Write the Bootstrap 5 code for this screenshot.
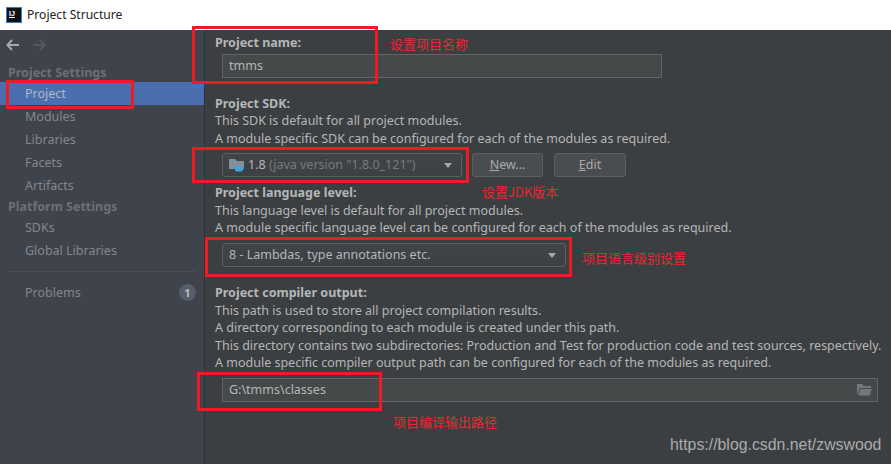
<!DOCTYPE html>
<html lang="zh">
<head>
    <meta charset="UTF-8">
    <meta name="viewport" content="width=device-width, initial-scale=1.0">
    <title>Project Structure</title>
    <link rel="stylesheet" href="https://cdn.jsdelivr.net/npm/bootstrap@5.3.0/dist/css/bootstrap.min.css">
    <script src="https://cdn.jsdelivr.net/npm/bootstrap@5.3.0/dist/js/bootstrap.bundle.min.js"></script>
    <style>
        html, body {
            height: 100%;
            overflow: hidden;
        }
        body {
            background-color: #3c3f41;
            color: #b4b6b7;
            font-family: "Noto Sans", "Open Sans", sans-serif;
            font-size: 12.5px;
            line-height: 17.5px;
        }
        .stage {
            width: 891px;
            height: 464px;
        }
        .titlebar {
            height: 30px;
            background-color: #fff;
            color: #222;
            font-size: 12.1px;
            padding-left: 6px;
            gap: 5px;
        }
        .ij-logo {
            width: 16px;
            height: 16px;
            background-color: #111;
            outline: 1px solid #2f7fd8;
            outline-offset: -1px;
            color: #fff;
            font: bold 7px/9px "Liberation Sans", sans-serif;
            padding: 2px 0 0 3px;
        }
        .sidebar {
            width: 205px;
            background-color: #3e434c;
            border-right: 1px solid #2f3234;
            color: #84878c;
        }
        .arrows {
            height: 29px;
            padding-left: 6px;
            gap: 14px;
        }
        .side-head {
            padding-left: 8px;
            font-weight: 700;
            color: #6d7076;
            height: 19px;
            line-height: 19px;
        }
        .side-item {
            height: 23px;
            line-height: 23px;
            padding-left: 25px;
            padding-right: 8px;
        }
        .side-item.picked {
            background-color: #4b6eaf;
            color: #b0b8c6;
        }
        .side-rule {
            border-top: 1px solid #4a4d52;
            margin: 9px 8px 9px 8px;
        }
        .count-pill {
            width: 17px;
            height: 17px;
            line-height: 17px;
            border-radius: 50%;
            background-color: #585d6b;
            color: #b8bbc0;
            font-size: 11px;
            font-weight: 700;
            text-align: center;
        }
        .pane {
            padding: 4px 0 0 10px;
        }
        .field-head {
            font-weight: 700;
        }
        .box-field {
            height: 24px;
            line-height: 22px;
            margin-left: 7px;
            padding: 0 5px 0 6px;
            background-color: #45494a;
            border: 1px solid #646464;
        }
        .box-combo {
            height: 24px;
            line-height: 22px;
            padding: 0 9px 0 6px;
            background-color: #3c3f41;
            background-image: linear-gradient(#40444a, #3d4043);
            border: 1px solid #5e6060;
            border-radius: 3px;
        }
        .combo-caret {
            width: 0;
            height: 0;
            border-left: 4.5px solid transparent;
            border-right: 4.5px solid transparent;
            border-top: 5px solid #a5a7a8;
        }
        .muted-ver {
            color: #787a7c;
        }
        .ide-btn {
            height: 24px;
            padding: 0;
            font-size: 12.5px;
            line-height: 22px;
            color: #a9abad;
            background-color: #494d50;
            border: 1px solid #5e6060;
            border-radius: 3px;
        }
        .name-box { width: 440px; margin-top: 2px; }
        .sdk-head { margin-top: 17px; }
        .sdk-row { margin: 6px 0 0 7px; }
        .sdk-combo { width: 240px; }
        .new-btn { width: 71px; margin-left: 10px; }
        .edit-btn { width: 72px; margin-left: 11px; }
        .lang-head { margin-top: 7px; }
        .lang-combo { width: 344px; margin: 6.5px 0 0 7px; }
        .out-head { margin-top: 17px; }
        .out-box { width: 656px; margin-top: 6.5px; }
        .note-box {
            position: absolute;
            border: 3px solid #ed1c24;
        }
        .note-text {
            position: absolute;
            color: #e8282e;
            font-family: "Noto Sans CJK SC", sans-serif;
            font-size: 13px;
            line-height: 18px;
            white-space: nowrap;
        }
        .mark-url {
            position: absolute;
            left: 670px;
            top: 434px;
            color: #a9abad;
            font-family: "Liberation Sans", sans-serif;
            font-size: 15.85px;
            line-height: 22px;
        }
        #b1 { left: 192px; top: 26px; width: 186px; height: 58px; }
        #b2 { left: 6px; top: 80px; width: 128px; height: 29px; }
        #b3 { left: 192px; top: 147px; width: 277px; height: 36px; }
        #b4 { left: 205px; top: 237px; width: 367px; height: 40px; }
        #b5 { left: 197px; top: 372px; width: 185px; height: 39px; }
        #t1 { left: 390px; top: 35px; }
        #t2 { left: 482px; top: 183px; }
        #t3 { left: 582px; top: 249px; }
        #t4 { left: 393px; top: 413px; }
    </style>
</head>
<body>
    <div class="stage position-relative d-flex flex-column">
        <div class="titlebar d-flex align-items-center flex-shrink-0">
            <div class="ij-logo"><u>IJ</u></div>
            <span>Project Structure</span>
        </div>
        <div class="d-flex flex-grow-1">
            <div class="sidebar flex-shrink-0">
                <div class="arrows d-flex align-items-center">
                    <svg width="13" height="12" viewBox="0 0 13 12"><path d="M6 1 1.500 6 6 11M2 6h11" fill="none" stroke="#a5a8ac" stroke-width="2"/></svg>
                    <svg width="13" height="12" viewBox="0 0 13 12"><path d="M7 1l4.500 5L7 11M0 6h11" fill="none" stroke="#55585d" stroke-width="2"/></svg>
                </div>
                <div class="side-head mt-1">Project Settings</div>
                <div class="side-item picked">Project</div>
                <div class="side-item">Modules</div>
                <div class="side-item">Libraries</div>
                <div class="side-item">Facets</div>
                <div class="side-item">Artifacts</div>
                <div class="side-head">Platform Settings</div>
                <div class="side-item">SDKs</div>
                <div class="side-item">Global Libraries</div>
                <div class="side-rule"></div>
                <div class="side-item d-flex justify-content-between align-items-center">
                    <span>Problems</span>
                    <span class="count-pill">1</span>
                </div>
            </div>
            <div class="pane flex-grow-1">
                <div class="field-head">Project name:</div>
                <div class="box-field name-box text-nowrap">tmms</div>

                <div class="field-head sdk-head">Project SDK:</div>
                <div>This SDK is default for all project modules.</div>
                <div>A module specific SDK can be configured for each of the modules as required.</div>
                <div class="sdk-row d-flex">
                    <div class="box-combo sdk-combo d-flex align-items-center justify-content-between">
                        <span class="d-flex align-items-center gap-1">
                            <svg width="15" height="14" viewBox="0 0 15 14"><path d="M0 1h6l2 2h7v8H0z" fill="#80919c"/><path d="M6 9h8v2.500q0 2-2 2H8q-2 0-2-2z" fill="#3aa6dc"/></svg>
                            <span>1.8 <span class="muted-ver">(java version "1.8.0_121")</span></span>
                        </span>
                        <span class="combo-caret"></span>
                    </div>
                    <button type="button" class="btn ide-btn new-btn"><u>N</u>ew...</button>
                    <button type="button" class="btn ide-btn edit-btn"><u>E</u>dit</button>
                </div>

                <div class="field-head lang-head">Project language level:</div>
                <div>This language level is default for all project modules.</div>
                <div>A module specific language level can be configured for each of the modules as required.</div>
                <div class="box-combo lang-combo d-flex align-items-center justify-content-between">
                    <span>8 - Lambdas, type annotations etc.</span>
                    <span class="combo-caret"></span>
                </div>

                <div class="field-head out-head">Project compiler output:</div>
                <div class="text-nowrap">This path is used to store all project compilation results.</div>
                <div class="text-nowrap">A directory corresponding to each module is created under this path.</div>
                <div class="text-nowrap">This directory contains two subdirectories: Production and Test for production code and test sources, respectively.</div>
                <div class="text-nowrap">A module specific compiler output path can be configured for each of the modules as required.</div>
                <div class="box-field out-box d-flex align-items-center justify-content-between">
                    <span>G:\tmms\classes</span>
                    <svg width="15" height="12" viewBox="0 0 15 12"><path d="M0 0h5l1.500 2H14v2H3L0 11z" fill="#73787a"/><path d="M3.500 5H15l-2.500 6.500H1z" fill="#73787a"/></svg>
                </div>
            </div>
        </div>

        <!-- red notes drawn over the dialog -->
        <div class="note-box" id="b1"></div>
        <div class="note-box" id="b2"></div>
        <div class="note-box" id="b3"></div>
        <div class="note-box" id="b4"></div>
        <div class="note-box" id="b5"></div>
        <div class="note-text" id="t1">设置项目名称</div>
        <div class="note-text" id="t2">设置JDK版本</div>
        <div class="note-text" id="t3">项目语言级别设置</div>
        <div class="note-text" id="t4">项目编译输出路径</div>
        <div class="mark-url">https://blog.csdn.net/zwswood</div>
    </div>
</body>
</html>
